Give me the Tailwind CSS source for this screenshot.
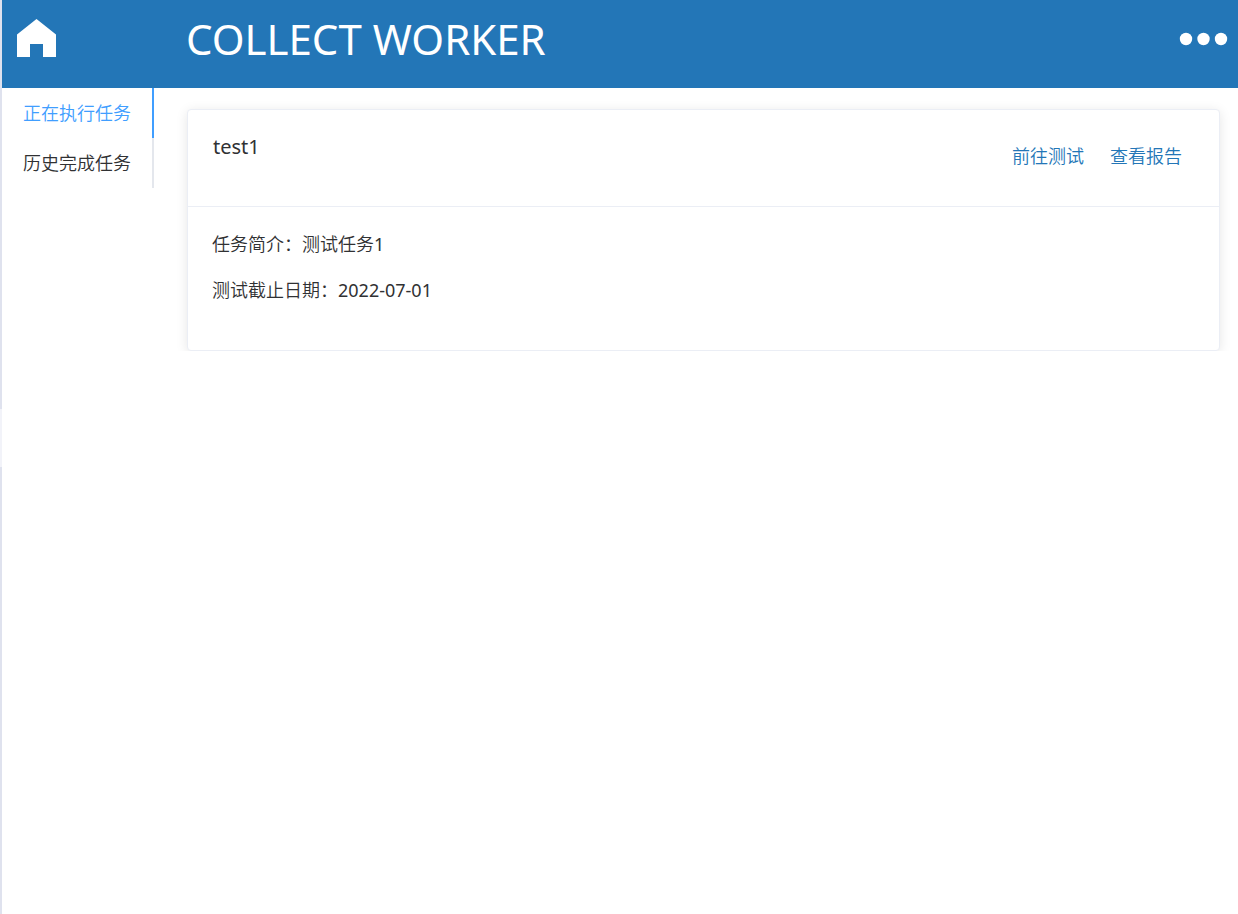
<!DOCTYPE html>
<html lang="zh-CN">
<head>
<meta charset="utf-8">
<meta name="viewport" content="width=device-width, initial-scale=1">
<title>COLLECT WORKER</title>
<script src="https://cdn.jsdelivr.net/npm/@tailwindcss/browser@4"></script>
</head>
<body class="flex min-h-screen bg-white font-['Noto_Sans','Noto_Sans_CJK_SC',sans-serif] text-lg text-[#303133]">
  <div class="flex w-0.5 shrink-0 flex-col bg-[#dfe2ee]" aria-hidden="true">
    <div class="mt-[409px] h-[58px] bg-[#f2f3f9]"></div>
  </div>
  <div class="min-w-0 flex-1">
    <header class="flex h-[88px] items-start bg-[#2376b7] pr-[11px] text-white">
      <a href="#" aria-label="首页" class="mt-[19px] ml-[15px] w-[169px] shrink-0">
        <svg class="h-[38px] w-[39px]" viewBox="0 0 39 38" fill="currentColor"><path d="M19.5 0 39 15.5V38H26V25H13v13H0V15.5z"/></svg>
      </a>
      <h1 class="mt-[7px] flex-1 text-[42px] leading-16">COLLECT WORKER</h1>
      <button type="button" aria-label="更多" class="mt-[33px]">
        <svg class="h-3 w-[47px] overflow-visible" viewBox="0 0 47 12" fill="currentColor"><circle cx="6" cy="6" r="6.2"/><circle cx="23.5" cy="6" r="6.2"/><circle cx="41" cy="6" r="6.2"/></svg>
      </button>
    </header>
    <div class="flex items-start">
      <nav class="flex w-38 shrink-0 flex-col">
        <button type="button" class="h-[50px] border-r-2 border-[#409eff] pl-[21px] text-left font-[350] text-[#409eff]">正在执行任务</button>
        <button type="button" class="h-[50px] border-r-2 border-[#e4e7ed] pl-[21px] text-left font-[350]">历史完成任务</button>
      </nav>
      <main class="min-w-0 flex-1 overflow-hidden pt-[21px] pr-[18px] pl-[33px]">
        <article class="rounded border border-[#ebeef5] bg-white shadow-[0_2px_12px_rgba(0,0,0,0.1)]">
          <div class="flex h-[97px] items-start justify-between border-b border-[#ebeef5] pr-[37px] pl-[25px]">
            <h2 class="mt-[21px] text-xl leading-8">test1</h2>
            <div class="mt-8 flex gap-[26px] font-[350] leading-7 text-[#2376b7]">
              <a href="#">前往测试</a>
              <a href="#">查看报告</a>
            </div>
          </div>
          <div class="flex h-[143px] flex-col gap-[18px] px-6 pt-[23px] font-[350] leading-7">
            <p>任务简介：测试任务<span class="font-normal">1</span></p>
            <p>测试截止日期：<time class="font-normal">2022-07-01</time></p>
          </div>
        </article>
      </main>
    </div>
  </div>
</body>
</html>
